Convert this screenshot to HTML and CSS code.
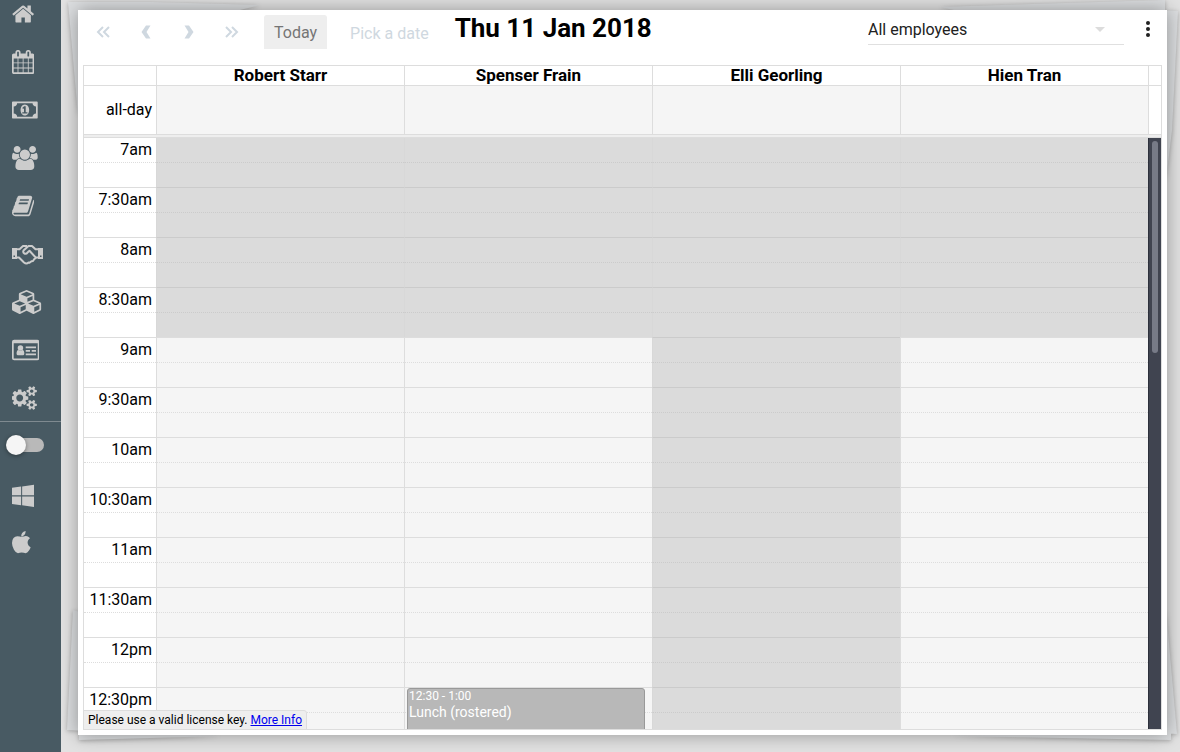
FILE: index.html
```html
<!DOCTYPE html>
<html lang="en">
<head>
    <meta charset="UTF-8">
    <meta name="viewport" content="width=device-width, initial-scale=1.0">
    <title>Appointments</title>
    <link rel="stylesheet" href="styles.css">
</head>
<body>
    <!-- Sidebar -->
    <nav class="sidebar">
        <a href="#" aria-label="Home"><svg class="icon" viewBox="64 0 1664 1792"><path d="M1472 992v480q0 26-19 45t-45 19h-384v-384h-256v384h-384q-26 0-45-19t-19-45v-480q0-1 .5-3t.5-3l575-474 575 474q1 2 1 6zm223-69l-62 74q-8 9-21 11h-3q-13 0-21-7l-692-577-692 577q-12 8-24 7-13-2-21-11l-62-74q-8-10-7-23.5t11-21.5l719-599q32-26 76-26t76 26l244 204v-195q0-14 9-23t23-9h192q14 0 23 9t9 23v408l219 182q10 8 11 21.5t-7 23.5z"/></svg></a>
        <a href="#" aria-label="Calendar"><svg class="icon" viewBox="64 0 1664 1792"><path d="M192 1664h288v-288h-288v288zm352 0h320v-288h-320v288zm-352-352h288v-320h-288v320zm352 0h320v-320h-320v320zm-352-384h288v-288h-288v288zm736 736h320v-288h-320v288zm-384-736h320v-288h-320v288zm768 736h288v-288h-288v288zm-384-352h320v-320h-320v320zm-352-864v-288q0-13-9.5-22.5t-22.5-9.5h-64q-13 0-22.5 9.5t-9.5 22.5v288q0 13 9.5 22.5t22.5 9.5h64q13 0 22.5-9.5t9.5-22.5zm736 864h288v-320h-288v320zm-384-384h320v-288h-320v288zm384 0h288v-288h-288v288zm32-480v-288q0-13-9.5-22.5t-22.5-9.5h-64q-13 0-22.5 9.5t-9.5 22.5v288q0 13 9.5 22.5t22.5 9.5h64q13 0 22.5-9.5t9.5-22.5zm384-64v1280q0 52-38 90t-90 38h-1408q-52 0-90-38t-38-90v-1280q0-52 38-90t90-38h128v-96q0-66 47-113t113-47h64q66 0 113 47t47 113v96h384v-96q0-66 47-113t113-47h64q66 0 113 47t47 113v96h128q52 0 90 38t38 90z"/></svg></a>
        <a href="#" aria-label="Payments"><svg class="icon" viewBox="0 0 1920 1792"><path d="M768 1152h384v-96h-128v-448h-114l-148 137 77 80q42-37 55-57h2v288h-128v96zm512-256q0 70-21 142t-59.5 134-101.5 101-138 39-138-39-101.5-101-59.5-134-21-142 21-142 59.5-134 101.5-101 138-39 138 39 101.5 101 59.5 134 21 142zm512 256v-512q-106 0-181-75t-75-181h-1152q0 106-75 181t-181 75v512q106 0 181 75t75 181h1152q0-106 75-181t181-75zm128-832v1152q0 26-19 45t-45 19h-1792q-26 0-45-19t-19-45v-1152q0-26 19-45t45-19h1792q26 0 45 19t19 45z"/></svg></a>
        <a href="#" aria-label="Clients"><svg class="icon" viewBox="0 0 1920 1792"><path d="M593 896q-162 5-265 128h-134q-82 0-138-40.5t-56-118.5q0-353 124-353 6 0 43.5 21t97.5 42.5 119 21.5q67 0 133-23-5 37-5 66 0 139 81 256zm1071 637q0 120-73 189.5t-194 69.5h-874q-121 0-194-69.5t-73-189.5q0-53 3.5-103.5t14-109 26.5-108.5 43-97.5 62-81 85.5-53.5 111.5-20q10 0 43 21.5t73 48 107 48 135 21.5 135-21.5 107-48 73-48 43-21.5q61 0 111.5 20t85.5 53.5 62 81 43 97.5 26.5 108.5 14 109 3.5 103.5zm-1024-1277q0 106-75 181t-181 75-181-75-75-181 75-181 181-75 181 75 75 181zm704 384q0 159-112.5 271.5t-271.5 112.5-271.5-112.5-112.5-271.5 112.5-271.5 271.5-112.5 271.5 112.5 112.5 271.5zm576 225q0 78-56 118.5t-138 40.5h-134q-103-123-265-128 81-117 81-256 0-29-5-66 66 23 133 23 59 0 119-21.5t97.5-42.5 43.5-21q124 0 124 353zm-128-609q0 106-75 181t-181 75-181-75-75-181 75-181 181-75 181 75 75 181z"/></svg></a>
        <a href="#" aria-label="Reports"><svg class="icon" viewBox="0 0 1664 1792"><path d="M1639 478q40 57 18 129l-275 906q-19 64-76.5 107.5t-122.5 43.5h-923q-77 0-148.5-53.5t-99.5-131.5q-24-67-2-127 0-4 3-27t4-37q1-8-3-21.5t-3-19.5q2-11 8-21t16.5-23.5 16.5-23.5q23-38 45-91.5t30-91.5q3-10 .5-30t-.5-28q3-11 17-28t17-23q21-36 42-92t25-90q1-9-2.5-32t.5-28q4-13 22-30.5t22-22.5q19-26 42.5-84.5t27.5-96.5q1-8-3-25.5t-2-26.5q2-8 9-18t18-23 17-21q8-12 16.5-30.5t15-35 16-36 19.5-32 26.5-23.5 36-11.5 47.5 5.5l-1 3q38-9 51-9h761q74 0 114 56t18 130l-274 906q-36 119-71.5 153.5t-128.5 34.5h-869q-27 0-38 15-11 16-1 43 24 70 144 70h923q29 0 56-15.5t35-41.5l300-987q7-22 5-57 38 15 59 43zm-1064 2q-4 13 2 22.5t20 9.5h608q13 0 25.5-9.5t16.5-22.5l21-64q4-13-2-22.5t-20-9.5h-608q-13 0-25.5 9.5t-16.5 22.5zm-83 256q-4 13 2 22.5t20 9.5h608q13 0 25.5-9.5t16.5-22.5l21-64q4-13-2-22.5t-20-9.5h-608q-13 0-25.5 9.5t-16.5 22.5z"/></svg></a>
        <a href="#" aria-label="Suppliers"><svg class="icon" viewBox="0 0 31 24"><path fill-rule="evenodd" d="M0 6h5v11H0zM1.500 13.500h1.500v1.500H1.500zM26 6h5v11h-5zM28 13.500h1.500v1.500H28z"/><path class="line" d="M5 7.200h2.500L11 4h4M5 15.500h2l5 5q2.500 2 4.500 0l1 .3 2-1.600 1.500-.2 1.500-2.200 2-1.300H26M26 7.200h-2.500L20 4h-3.500l-5 4.500q-.8 2 .8 3 2 .8 3.200-.9l2-1.800 6 6.500"/></svg></a>
        <a href="#" aria-label="Stock"><svg class="icon" viewBox="0 0 2304 1792"><path d="M640 1632l384-192v-314l-384 164v342zm-64-454l404-173-404-173-404 173zm1088 454l384-192v-314l-384 164v342zm-64-454l404-173-404-173-404 173zm-448-293l384-165v-266l-384 164v267zm-64-379l441-189-441-189-441 189zm1088 518v416q0 36-19 67t-52 47l-448 224q-25 14-57 14t-57-14l-448-224q-4-2-7-4-2 2-7 4l-448 224q-25 14-57 14t-57-14l-448-224q-33-16-52-47t-19-67v-416q0-38 21.5-70t56.5-48l434-186v-400q0-38 21.5-70t56.5-48l448-192q23-10 50-10t50 10l448 192q35 16 56.5 48t21.5 70v400l434 186q36 16 57 48t21 70z"/></svg></a>
        <a href="#" aria-label="Staff"><svg class="icon" viewBox="0 0 2048 1792"><path fill-rule="evenodd" d="M160 128h1728q160 0 160 160v1216q0 160-160 160H160q-160 0-160-160V288q0-160 160-160zM128 384v1120q0 32 32 32h1728q32 0 32-32V384z"/><circle cx="630" cy="740" r="205"/><path d="M480 890q150 110 300 0 140 20 140 270 0 120-80 120H420q-80 0-80-120 0-250 140-270zM1024 640h768v128h-768zM1024 896h320v128h-320zM1472 896h320v128h-320zM1024 1152h768v128h-768z"/></svg></a>
        <a href="#" aria-label="Settings"><svg class="icon" viewBox="0 0 1920 1792"><path d="M832 896q0-106-75-181t-181-75-181 75-75 181 75 181 181 75 181-75 75-181zm768 512q0-52-38-90t-90-38-90 38-38 90q0 53 37.5 90.5t90.5 37.5 90.5-37.5 37.5-90.5zm0-1024q0-52-38-90t-90-38-90 38-38 90q0 53 37.5 90.5t90.5 37.5 90.5-37.5 37.5-90.5zm-384 421v185q0 10-7 19.5t-16 10.500l-155 24q-11 35-32 76 34 48 90 115 7 11 7 20 0 12-7 19-23 30-82.5 89.5t-78.5 59.5q-11 0-21-7l-115-90q-37 19-77 31-11 108-23 155-7 24-30 24h-186q-11 0-20-7.5t-10-17.500l-23-153q-34-10-75-31l-118 89q-7 7-20 7-11 0-21-8-144-133-144-160 0-9 7-19 10-14 41-53t47-61q-23-44-35-82l-152-24q-10-1-17-9.5t-7-19.500v-185q0-10 7-19.5t16-10.500l155-24q11-35 32-76-34-48-90-115-7-11-7-20 0-12 7-20 22-30 82-89t79-59q11 0 21 7l115 90q34-18 77-32 11-108 23-154 7-24 30-24h186q11 0 20 7.5t10 17.500l23 153q34 10 75 31l118-89q8-7 20-7 11 0 21 8 144 133 144 160 0 8-7 19-12 16-42 54t-45 60q23 48 34 82l152 23q10 2 17 10.5t7 19.500zm640 533v140q0 16-149 31-12 27-30 52 51 113 51 138 0 4-4 7-122 71-124 71-8 0-46-47t-52-68q-20 2-30 2t-30-2q-14 21-52 68t-46 47q-2 0-124-71-4-3-4-7 0-25 51-138-18-25-30-52-149-15-149-31v-140q0-16 149-31 13-29 30-52-51-113-51-138 0-4 4-7 4-2 35-20t59-34 30-16q8 0 46 46.5t52 67.500q20-2 30-2t30 2q51-71 92-112l6-2q4 0 124 70 4 3 4 7 0 25-51 138 17 23 30 52 149 15 149 31zm0-1024v140q0 16-149 31-12 27-30 52 51 113 51 138 0 4-4 7-122 71-124 71-8 0-46-47t-52-68q-20 2-30 2t-30-2q-14 21-52 68t-46 47q-2 0-124-71-4-3-4-7 0-25 51-138-18-25-30-52-149-15-149-31v-140q0-16 149-31 13-29 30-52-51-113-51-138 0-4 4-7 4-2 35-20t59-34 30-16q8 0 46 46.5t52 67.500q20-2 30-2t30 2q51-71 92-112l6-2q4 0 124 70 4 3 4 7 0 25-51 138 17 23 30 52 149 15 149 31z"/></svg></a>
        <div class="switch-row">
            <input type="checkbox" class="switch" aria-label="Toggle menu">
        </div>
        <a href="#" aria-label="Windows app"><svg class="icon" viewBox="0 0 1664 1792"><path d="M682 1006v651l-682-94v-557h682zm0-743v659h-682v-565l682-94zm982 743v786l-907-125v-661h907zm0-878v794h-907v-669l907-125z"/></svg></a>
        <a href="#" aria-label="Mac app"><svg class="icon" viewBox="192 0 1408 1792"><path d="M1585 1215q-39 125-123 250-129 196-257 196-49 0-140-32-86-32-151-32-61 0-142 33-81 34-132 34-152 0-301-259-147-261-147-503 0-228 113-374 113-144 284-144 72 0 177 30 104 30 138 30 45 0 143-34 102-34 173-34 119 0 213 65 52 36 104 100-79 67-114 118-65 94-65 207 0 124 69 223t158 126zm-376-1173q0 61-29 136-30 75-93 138-54 54-108 72-37 11-104 17 3-149 78-257 74-107 250-148 1 3 2.5 11t2.5 11q0 4 .5 10t.5 10z"/></svg></a>
    </nav>

    <main class="page">
        <!-- Loose sheets behind the card -->
        <svg class="sheets" viewBox="61 0 1119 752" preserveAspectRatio="none" aria-hidden="true">
            <path d="M68 2L150 2 260 5 200 20H90L78 115zM73 610L67 730L90 731V615zM79 730V740L220 736zM1165 0V20H1000L940 7zM1160 10L1178 11L1172 130L1166 180zM1166 610L1177 734L1160 733zM1171 730V740L950 736z"/>
        </svg>

        <section class="card">
            <header class="toolbar">
                <button class="arrow" aria-label="Back a week"><svg width="16" height="16"><path class="thin" d="M8 3L3 8l5 5M14 3L9 8l5 5"/></svg></button>
                <button class="arrow" aria-label="Previous day"><svg width="16" height="16"><path d="M8 1.500h4.500L8.500 8l4 6.500H8L3.500 8z"/></svg></button>
                <button class="arrow" aria-label="Next day"><svg width="16" height="16"><path d="M8 1.500H3.500L7.500 8l-4 6.500H8L12.500 8z"/></svg></button>
                <button class="arrow" aria-label="Forward a week"><svg width="16" height="16"><path class="thin" d="M2 3l5 5-5 5M8 3l5 5-5 5"/></svg></button>
                <button class="today">Today</button>
                <button class="pick">Pick a date</button>
                <h1>Thu 11 Jan 2018</h1>
                <div class="filter">
                    <select aria-label="Employees">
                        <option>All employees</option>
                    </select>
                </div>
                <button class="more" aria-label="More"><svg width="6" height="18"><circle cx="3" cy="3" r="2"/><circle cx="3" cy="9" r="2"/><circle cx="3" cy="15" r="2"/></svg></button>
            </header>

            <div class="calendar">
                <div class="calendar-head">
                    <table>
                        <colgroup><col class="axis"><col><col><col><col></colgroup>
                        <thead>
                            <tr>
                                <td></td>
                                <th scope="col">Robert Starr</th>
                                <th scope="col">Spenser Frain</th>
                                <th scope="col">Elli Georling</th>
                                <th scope="col">Hien Tran</th>
                            </tr>
                        </thead>
                        <tbody>
                            <tr class="all-day">
                                <th scope="row">all-day</th>
                                <td></td><td></td><td></td><td></td>
                            </tr>
                        </tbody>
                    </table>
                    <div class="gutter"></div>
                </div>
                <div class="divider"></div>
                <div class="calendar-body">
                    <div class="slots">
                        <table>
                            <colgroup><col class="axis"><col><col><col><col></colgroup>
                            <tbody id="slots"></tbody>
                        </table>
                    </div>
                    <div class="scrollbar"><div class="thumb"></div></div>
                </div>
                <div class="license">Please use a valid license key. <a href="#">More Info</a></div>
            </div>
        </section>
    </main>

    <script src="script.js"></script>
</body>
</html>
```
FILE: styles.css
```css
* {
    box-sizing: border-box;
}
body {
    display: flex;
    height: 100vh;
    margin: 0;
    font-family: Roboto, Arial, sans-serif;
    font-size: 16px;
    color: #000;
    background-color: #e2e2e2;
}
button, select {
    font: inherit;
    border: none;
    background: none;
    padding: 0;
    cursor: pointer;
}

/* Sidebar */
.sidebar {
    flex: 0 0 61px;
    padding-top: 2px;
    background-color: #485a63;
}
.sidebar a {
    display: block;
    height: 24px;
    margin-bottom: 24px;
    padding-left: 12px;
}
.icon {
    display: block;
    height: 24px;
    fill: #ccc;
}
.icon .line {
    fill: none;
    stroke: #ccc;
    stroke-width: 2;
    stroke-linejoin: round;
}
.switch-row {
    height: 62px;
    margin-top: -13px;
    padding: 13px 6px;
    border-top: 1px solid #7f8a90;
}
.switch {
    appearance: none;
    display: flex;
    align-items: center;
    width: 38px;
    height: 20px;
    margin: 0;
}
.switch::before {
    content: "";
    width: 20px;
    height: 20px;
    border-radius: 50%;
    background-color: #f5f5f5;
    box-shadow: 0 1px 4px rgba(0, 0, 0, 0.4);
    z-index: 1;
}
.switch::after {
    content: "";
    width: 36px;
    height: 14px;
    margin-left: -18px;
    border-radius: 7px;
    background-color: #b9b9b9;
}

/* Page and card */
.page {
    position: relative;
    flex: 1;
    min-width: 0;
    display: flex;
    padding: 10px 13px 17px 17px;
    overflow: hidden;
}
.sheets {
    position: absolute;
    inset: 0;
    width: 100%;
    height: 100%;
    fill: #dcdee0;
    filter: drop-shadow(0 1px 2px rgba(0, 0, 0, 0.25));
}
.card {
    position: relative;
    flex: 1;
    min-width: 0;
    display: flex;
    flex-direction: column;
    padding: 5px;
    background-color: #fff;
    box-shadow: 0 0 18px rgba(0, 0, 0, 0.35);
}

/* Toolbar */
.toolbar {
    display: flex;
    height: 50px;
}
.arrow {
    width: 43px;
    height: 34px;
}
.arrow svg {
    display: block;
    margin-left: 12px;
    fill: #cfd8e0;
}
.arrow .thin {
    fill: none;
    stroke: #cfd8e0;
    stroke-width: 2;
}
.today {
    height: 36px;
    margin-left: 9px;
    padding: 0 10px;
    border-radius: 2px;
    color: #757575;
    background-color: #eee;
    background-clip: padding-box;
    border-bottom: 2px solid transparent;
    line-height: 36px;
}
.pick {
    height: 36px;
    margin-left: 23px;
    color: #cfd8e0;
}
h1 {
    flex: 1;
    margin: 0 0 0 26px;
    font-size: 26px;
    line-height: 27px;
    white-space: nowrap;
}
.filter {
    position: relative;
    width: 256px;
    height: 30px;
    border-bottom: 1px solid #e0e0e0;
}
.filter::after {
    content: "";
    position: absolute;
    top: 12px;
    right: 19px;
    border: 5px solid transparent;
    border-top-color: #dcdcdc;
    border-bottom: none;
    pointer-events: none;
}
.filter select {
    appearance: none;
    width: 100%;
    height: 28px;
    color: #212121;
}
.more {
    width: 28px;
    height: 28px;
    margin: 0 0 0 10px;
}
.more svg {
    display: block;
    margin: 0 auto;
    fill: #212121;
}

/* Calendar */
.calendar {
    position: relative;
    flex: 1;
    min-height: 0;
    display: flex;
    flex-direction: column;
    border: 1px solid #ddd;
}
.calendar-head {
    display: flex;
}
table {
    flex: 1;
    width: 100%;
    table-layout: fixed;
    border-collapse: separate;
    border-spacing: 0;
}
.axis {
    width: 72px;
}
th, td {
    padding: 0;
    border-left: 1px solid #ddd;
}
tr > :first-child {
    border-left: none;
}
thead th, thead td {
    height: 20px;
    border-bottom: 1px solid #ddd;
    font-size: 17px;
    line-height: 19px;
}
tbody th {
    padding-right: 4px;
    font-weight: normal;
    text-align: right;
    white-space: nowrap;
}
tbody td {
    background-color: #f5f5f5;
}
.all-day > * {
    height: 48px;
    line-height: 16px;
}
.gutter {
    flex: 0 0 13px;
    border-left: 1px solid #ddd;
    background: linear-gradient(#ddd, #ddd) 0 19px / 100% 1px no-repeat;
}
.divider {
    height: 4px;
    flex-shrink: 0;
    border: 1px solid #ddd;
    border-width: 1px 0;
    background-color: #eee;
}
.calendar-body {
    flex: 1;
    min-height: 0;
    display: flex;
}
.slots {
    flex: 1;
    overflow: hidden;
}
.slot > * {
    height: 25px;
    border-top: 1px solid #ddd;
    line-height: 24px;
}
.slot.minor > * {
    border-top-style: dotted;
}
.slot:first-child > * {
    height: 24px;
    border-top: none;
}
.slot td {
    position: relative;
}
.slot .closed {
    border-top-color: #cbcbcb;
    border-left-color: #d8d8d8;
    background-color: #dbdbdb;
}
.event {
    position: absolute;
    top: 0;
    left: 2px;
    right: 7px;
    height: 50px;
    padding: 0 1px;
    border: 1px solid #999;
    border-radius: 3px;
    color: #fff;
    background-color: #b8b8b8;
    font-size: 14px;
    line-height: 18px;
    z-index: 1;
}
.event time {
    display: block;
    font-size: 12px;
    line-height: 14px;
}
.scrollbar {
    flex: 0 0 13px;
    padding: 3px 3px 0;
    border-left: 1px solid #2d313c;
    background-color: #404450;
}
.thumb {
    height: 36%;
    border-radius: 3px;
    background-color: #777b87;
}
.license {
    position: absolute;
    left: -1px;
    bottom: -1px;
    padding: 0 4px;
    border: 1px solid #ddd;
    border-top-right-radius: 3px;
    background-color: #eee;
    font-size: 12px;
    line-height: 18px;
    z-index: 2;
}
.license a {
    color: #0000ee;
}
```
FILE: script.js
```js
const slots = document.getElementById('slots');
const openingSlot = 8; // 9am, counted in quarter hours from 7am
const dayOff = 2; // column of the employee who is not rostered

function formatHour(slot) {
    const minutes = 7 * 60 + slot * 15;
    const hour = Math.floor(minutes / 60);
    const half = minutes % 60 ? ':30' : '';
    return `${hour > 12 ? hour - 12 : hour}${half}${hour < 12 ? 'am' : 'pm'}`;
}

// Render one row per quarter hour
for (let i = 0; i < 24; i++) {
    const row = document.createElement('tr');
    row.className = i % 2 ? 'slot minor' : 'slot';

    const label = document.createElement('th');
    label.scope = 'row';
    label.textContent = i % 2 ? '' : formatHour(i);
    row.appendChild(label);

    for (let col = 0; col < 4; col++) {
        const cell = document.createElement('td');
        if (i < openingSlot || col === dayOff) {
            cell.className = 'closed';
        }
        if (i === 22 && col === 1) {
            cell.innerHTML = '<div class="event"><time>12:30 - 1:00</time>Lunch (rostered)</div>';
        }
        row.appendChild(cell);
    }
    slots.appendChild(row);
}
```
